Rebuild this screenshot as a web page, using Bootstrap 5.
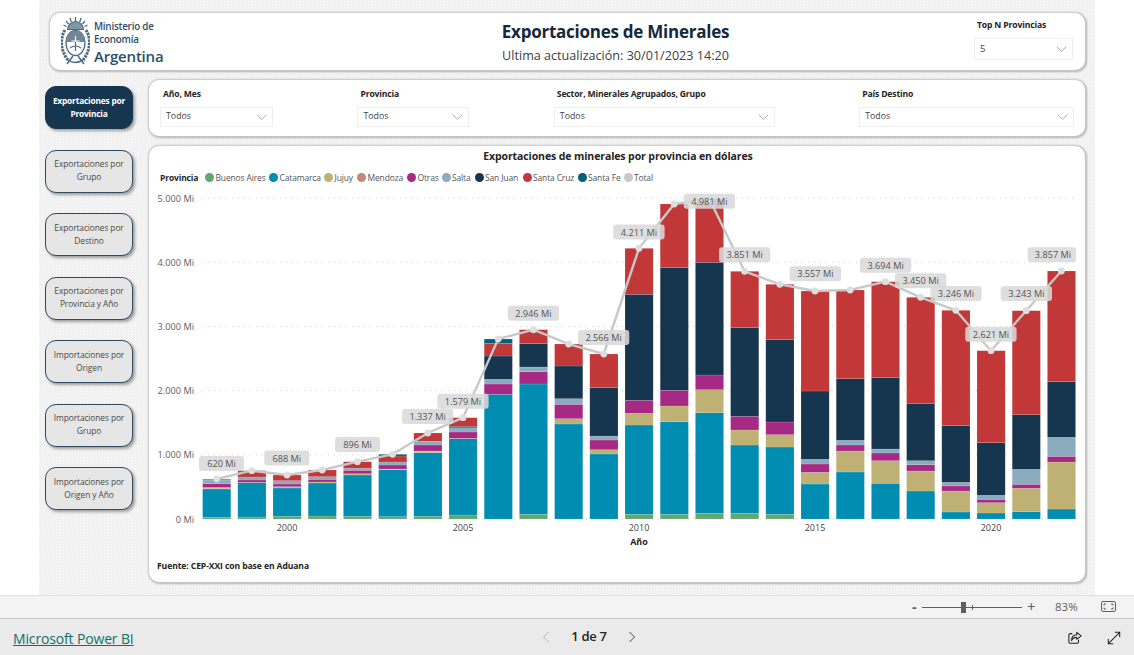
<!DOCTYPE html>
<html lang="es">
<head>
<meta charset="utf-8">
<title>Exportaciones de Minerales</title>
<link href="https://cdn.jsdelivr.net/npm/bootstrap@5.3.0/dist/css/bootstrap.min.css" rel="stylesheet">
<style>
html,body{height:100%;overflow:hidden;background:#fff;font-family:"Open Sans","Noto Sans",sans-serif;color:#333}
.app-shell{height:655px;width:1134px}
.report-canvas{width:1056px;height:595px;margin-left:39px;padding:13px 10px 0 11px;background-color:#f3f3f3;background-image:conic-gradient(#f0f0f0 25%,#f6f6f6 0 50%,#f0f0f0 0 75%,#f6f6f6 0);background-size:3px 3px}
.pane{background:#fff;border-radius:10px;box-shadow:0 0 2px 1px #c9c9c9,1px 1px 2px 1px #b5b5b5}
.head-pane{height:57px;padding:0 12px 0 11px}
.logo-box{width:208px;height:57px}
.logo-words{color:#2c4f68;line-height:1;margin-left:4px;padding-top:2px}
.logo-words .minor{font-size:9.8px;font-weight:600;line-height:13px;letter-spacing:-.2px}
.logo-words .major{font-size:15px;font-weight:600;line-height:19px;letter-spacing:-.2px;padding-top:1px}
.title-block{padding-top:2px}
.main-title{font-size:17px;font-weight:700;color:#16293a;line-height:24px;letter-spacing:-.25px}
.sub-title{font-size:12.6px;color:#404040;line-height:18px;margin-top:3px}
.field-label{font-size:8.6px;font-weight:700;color:#252423;line-height:12px;letter-spacing:-.15px;margin-left:3px}
.drop-box{height:20px;background:#fff;border:1px solid #eee;font-size:8.8px;color:#444;padding:0 5px;margin-top:7px}
.top-n{width:99px;margin:-4px 0 0 12px}
.top-n .drop-box{height:22px;margin-top:7px;font-size:9.5px}
.body-flow{margin-top:10px;margin-left:-5px}
.side-nav{width:88px;padding-top:6px;gap:20.5px;margin-right:16px}
.page-btn{width:88px;height:43px;padding:0 2px 2px;border-radius:11px;border:1.3px solid #2f4c63;background:#e6e6e6;color:#4a4a4a;font-size:8.4px;line-height:13px;box-shadow:2px 2px 3px rgba(0,0,0,.35);letter-spacing:-.1px}
.page-btn.is-current,.page-btn.is-current:hover{background:#16354e;border-color:#16354e;color:#fff;font-weight:700;letter-spacing:-.2px}
.main-col{width:936px;gap:10px}
.filter-pane{height:56px;padding:8px 11px 0;gap:84.5px}
.w-a{width:113px}.w-b{width:112px}.w-c{width:221px}.w-d{width:215px}
.chart-pane{height:436px}
.chart-title{font-size:10.5px;font-weight:700;color:#252423;padding-top:3px;line-height:14px;padding-left:2px;letter-spacing:-.1px}
.legend-row{font-size:8.5px;color:#555;padding:4px 0 0 11px;height:25px;line-height:12px;letter-spacing:-.15px}
.legend-row b{color:#252423;width:45px}
.lg{width:var(--w);align-items:center;gap:1.5px}
.dot{width:9px;height:9px;border-radius:50%;flex:none}
.plot{display:block;width:936px;height:360px}
.plot text{font-family:"Open Sans","Noto Sans",sans-serif}
.source-note{font-size:8.6px;font-weight:700;color:#252423;padding:12px 0 0 8px;line-height:12px;letter-spacing:-.1px}
.zoom-bar{height:24px;background:#f3f3f3;border-top:1px solid #e0e0e0;border-bottom:1px solid #c8c8c8;color:#605e5c;font-size:11.5px}
.zoom-minus{position:absolute;left:912px;top:0;line-height:22px;font-size:14px;font-weight:700}
.zoom-plus{position:absolute;left:1027px;top:0;line-height:21px;font-size:15px}
.zoom-track{position:absolute;left:922px;top:11px;width:100px;height:1px;background:#605e5c}
.zoom-thumb{position:absolute;left:39px;top:-5px;width:5px;height:11px;background:#605e5c}
.zoom-tick{position:absolute;left:50px;top:-2px;width:1px;height:5px;background:#605e5c}
.zoom-pct{position:absolute;left:1055px;top:0;line-height:22px}
.zoom-fit{position:absolute;left:1101px;top:5px}
.foot-bar{height:36px;background:#eaeaea}
.pbi-link{position:absolute;left:13px;top:10px;font-size:14px;color:#107069;line-height:20px;letter-spacing:-.15px}
.pager{position:absolute;left:541px;top:0;width:96px;height:36px;color:#252423;font-size:13px;font-weight:600;letter-spacing:-.3px}
.foot-ico{position:absolute;top:12px}
</style>
</head>
<body>
<div class="app-shell d-flex flex-column">
  <div class="report-canvas">
    <div class="pane head-pane d-flex align-items-center">
      <div class="logo-box d-flex align-items-center">
        <svg width="29" height="49" viewBox="0 0 29 49" aria-hidden="true">
          <g fill="none" stroke="#4f6a7e">
            <path d="M14.500 0v4M9 1l1.200 4M20 1l-1.200 4M5 4l2.500 3M24 4l-2.500 3M2.500 8l3 1.500M26.500 8l-3 1.500" stroke-width="1.300"/>
            <path d="M6.500 12.500a8 8 0 0 1 16 0z" fill="#7f96a7" stroke-width="1.200"/>
            <ellipse cx="14.500" cy="26" rx="9.500" ry="12.500" fill="#fff" stroke-width="1.400"/>
            <path d="M5.300 25h18.400v-4.500c-1.500-4-5-7-9.200-7s-7.700 3-9.200 7z" fill="#6f8798" stroke="none"/>
            <path d="M14.500 19v14M10.500 24h8M9 31q5.500-4 11 0" stroke="#fff" stroke-width="1.100"/>
            <path d="M14.500 25v9M9 31q5.500-4 11 0" stroke-width="1.200"/>
            <path d="M4 13C-1 21-1 33 7 43M25 13c5 8 5 20-3 30" stroke-width="3" stroke-dasharray="2.500 .8"/>
            <path d="M7 43q7 5 15 0M12 39l-6 8M17 39l6 8" stroke-width="1.500"/>
          </g>
        </svg>
        <div class="logo-words">
          <div class="minor">Ministerio de</div>
          <div class="minor">Economía</div>
          <div class="major">Argentina</div>
        </div>
      </div>
      <div class="flex-grow-1 text-center title-block">
        <div class="main-title">Exportaciones de Minerales</div>
        <div class="sub-title">Ultima actualización: 30/01/2023 14:20</div>
      </div>
      <div class="top-n">
        <div class="field-label">Top N Provincias</div>
        <div class="drop-box d-flex align-items-center justify-content-between"><span>5</span>
          <svg width="11" height="6" viewBox="0 0 12 7" aria-hidden="true"><path d="M.5.800l5.500 5.400L11.500.800" fill="none" stroke="#999"/></svg></div>
      </div>
    </div>
    <div class="body-flow d-flex">
      <div class="side-nav d-flex flex-column">
        <button class="btn page-btn is-current">Exportaciones por Provincia</button>
        <button class="btn page-btn">Exportaciones por Grupo</button>
        <button class="btn page-btn">Exportaciones por Destino</button>
        <button class="btn page-btn">Exportaciones por Provincia y Año</button>
        <button class="btn page-btn">Importaciones por Origen</button>
        <button class="btn page-btn">Importaciones por Grupo</button>
        <button class="btn page-btn">Importaciones por Origen y Año</button>
      </div>
      <div class="main-col d-flex flex-column">
        <div class="pane filter-pane d-flex">
          <div class="w-a"><div class="field-label">Año, Mes</div><div class="drop-box d-flex align-items-center justify-content-between"><span>Todos</span><svg width="11" height="6" viewBox="0 0 12 7" aria-hidden="true"><path d="M.5.800l5.500 5.400L11.500.800" fill="none" stroke="#999"/></svg></div></div>
          <div class="w-b"><div class="field-label">Provincia</div><div class="drop-box d-flex align-items-center justify-content-between"><span>Todos</span><svg width="11" height="6" viewBox="0 0 12 7" aria-hidden="true"><path d="M.5.800l5.500 5.400L11.500.800" fill="none" stroke="#999"/></svg></div></div>
          <div class="w-c"><div class="field-label">Sector, Minerales Agrupados, Grupo</div><div class="drop-box d-flex align-items-center justify-content-between"><span>Todos</span><svg width="11" height="6" viewBox="0 0 12 7" aria-hidden="true"><path d="M.5.800l5.500 5.400L11.500.800" fill="none" stroke="#999"/></svg></div></div>
          <div class="w-d"><div class="field-label">País Destino</div><div class="drop-box d-flex align-items-center justify-content-between"><span>Todos</span><svg width="11" height="6" viewBox="0 0 12 7" aria-hidden="true"><path d="M.5.800l5.500 5.400L11.500.800" fill="none" stroke="#999"/></svg></div></div>
        </div>
        <div class="pane chart-pane">
          <div class="chart-title text-center">Exportaciones de minerales por provincia en dólares</div>
          <div class="legend-row d-flex align-items-center" id="legend"></div>
          <svg class="plot" id="plot" viewBox="149 188 936 360" role="img" aria-label="Exportaciones por provincia"></svg>
          <div class="source-note">Fuente: CEP-XXI con base en Aduana</div>
        </div>
      </div>
    </div>
  </div>
  <div class="zoom-bar position-relative">
    <span class="zoom-minus">-</span>
    <div class="zoom-track"><div class="zoom-thumb"></div><div class="zoom-tick"></div></div>
    <span class="zoom-plus">+</span>
    <span class="zoom-pct">83%</span>
    <svg class="zoom-fit" width="15" height="12" viewBox="0 0 15 12" aria-hidden="true"><rect x=".5" y=".5" width="14" height="10" rx="1.500" fill="none" stroke="#605e5c"/><path d="M3 4.500V3h2M12 4.500V3h-2M3 6.500V8h2M12 6.500V8h-2" fill="none" stroke="#605e5c"/></svg>
  </div>
  <div class="foot-bar position-relative">
    <a class="pbi-link" href="#">Microsoft Power BI</a>
    <div class="pager d-flex align-items-center justify-content-between">
      <svg width="10" height="12" viewBox="0 0 10 12" aria-hidden="true"><path d="M7.500 1L2.500 6l5 5" fill="none" stroke="#b5b5b5"/></svg>
      <span>1 de 7</span>
      <svg width="10" height="12" viewBox="0 0 10 12" aria-hidden="true"><path d="M2.500 1l5 5-5 5" fill="none" stroke="#444"/></svg>
    </div>
    <svg class="foot-ico" style="left:1068px" width="14" height="14" viewBox="0 0 16 16" aria-hidden="true"><path d="M5 3H2.500A1.500 1.500 0 0 0 1 4.500v8A1.500 1.500 0 0 0 2.500 14h8a1.500 1.500 0 0 0 1.500-1.500V10" fill="none" stroke="#252423" stroke-width="1.200"/><path d="M10 1.500l5 4-5 4V7.300C7 7.300 5 8.500 4 11c0-4 2-6.500 6-6.800z" fill="none" stroke="#252423" stroke-width="1.200" stroke-linejoin="round"/></svg>
    <svg class="foot-ico" style="left:1107px" width="14" height="14" viewBox="0 0 16 16" aria-hidden="true"><path d="M1.500 14.500l13-13M9 1.500h5.500V7M1.500 9v5.500H7" fill="none" stroke="#252423" stroke-width="1.200"/></svg>
  </div>
</div>
<script src="https://cdn.jsdelivr.net/npm/bootstrap@5.3.0/dist/js/bootstrap.bundle.min.js"></script>
<script>
var C={g:'#63a66e',b:'#018db1',t:'#bfb073',m:'#c08a72',o:'#a62a84',s:'#8babbf',j:'#16354e',r:'#c23738',f:'#01607a',total:'#c8c8c8'};
var leg=[['Buenos Aires',C.g,64],['Catamarca',C.b,55],['Jujuy',C.t,33],['Mendoza',C.m,50],['Otras',C.o,34.5],['Salta',C.s,33],['San Juan',C.j,48],['Santa Cruz',C.r,55],['Santa Fe',C.f,46],['Total',C.total,40]];
var lh='<b class="d-block">Provincia</b>';
leg.forEach(function(l){lh+='<span class="lg d-flex" style="--w:'+l[2]+'px"><i class="dot" style="background:'+l[1]+'"></i>'+l[0]+'</span>'});
document.getElementById('legend').innerHTML=lh;
/* stack tops in screen y: green, blue, tan, mendoza, magenta, salta, san juan, santa cruz, santa fe */
var S=[
[517.3,489,488.3,487.3,483.7,480,479.7,479,479],
[517,482.7,482.3,482.3,480,477.3,477,470.7,470.7],
[516.3,488,487,486.7,484,480.7,480.7,475,475],
[516,483,482,482,479.3,476.7,476.7,470,470],
[516.3,475,473.7,473.7,470.3,468.3,468.3,461.7,461.7],
[516.7,469.7,469.3,469,465,462.3,462,456,454.3],
[516.3,452.7,451.7,451,445,441.3,441.3,433,433],
[515,438.7,438.7,438.3,432,427.7,426.3,417.7,417.7],
[519,394.3,394.3,394.3,384,379.3,356,343.3,339],
[514.3,384,384,384,371.7,367,343.7,329.7,329.7],
[519,424,418.7,418.7,404.3,398.7,366,344,344],
[519,454,449.7,449.7,440,436,387.7,354,354],
[514.3,425,413.3,413.3,400.3,400.3,294.3,248.3,248.3],
[514.3,421.7,406,406,390.3,390.3,267.7,204,204],
[513.3,412.7,389.7,389.7,375,375,262.3,199,199],
[513.3,445,430,430,416.3,416.3,327.7,271.3,271.3],
[514.3,447,434.7,434.7,422,422,339.7,284.3,284.3],
[519,484,472.3,472.3,464,459.3,391,291,291],
[519,472,451,451,445,440.3,378.7,290,290],
[519,483.3,460.7,460.7,453,449,377.7,281.7,281.7],
[519,491,471,471,464.7,460.7,403.3,297.3,297.3],
[519,512,491,491,486,482.3,425.7,310.3,310.3],
[519,513,502.7,502.7,499.3,495.3,442.7,350.7,350.7],
[519,511.7,488.3,488.3,484.3,469.3,414.7,310.7,310.7],
[519,509,462,462,456.3,437.3,381.7,271,271]];
var keys=['g','b','t','m','o','s','j','r','f'];
var LBL=[['620 Mi',199,456,45],['688 Mi',264.3,450.5,45],['896 Mi',335,437,45],['1.337 Mi',402,409,51.3],['1.579 Mi',437.3,393.7,51.3],['2.946 Mi',507.7,305.7,51.3],['2.566 Mi',578,330,51.3],['4.211 Mi',613.3,224.5,51.3],['4.981 Mi',683.7,193.7,51.3],['3.851 Mi',719,247.3,51.3],['3.557 Mi',789.7,266.3,51.3],['3.694 Mi',860,257.7,51.3],['3.450 Mi',895,273.3,51.3],['3.246 Mi',930.3,286,51.3],['2.621 Mi',965.3,326.7,51.3],['3.243 Mi',1000.7,286,51.3],['3.857 Mi',1027.7,247.3,48.3]];
function cx(i){return 216.6+35.2*i}
var h='';
[[198,'5.000 Mi'],[262.2,'4.000 Mi'],[326.4,'3.000 Mi'],[390.6,'2.000 Mi'],[454.8,'1.000 Mi'],[519,'0 Mi']].forEach(function(t){
 h+='<line x1="202" x2="1076" y1="'+t[0]+'" y2="'+t[0]+'" stroke="#cfcfcf" stroke-dasharray="1 5"/>';
 h+='<text x="194" y="'+(t[0]+3.5)+'" text-anchor="end" font-size="9.2" fill="#605e5c">'+t[1]+'</text>';
});
S.forEach(function(a,i){var prev=519,x=cx(i)-14;
 a.forEach(function(top,k){if(prev-top>.05){h+='<rect x="'+x.toFixed(1)+'" y="'+top+'" width="28.2" height="'+(prev-top).toFixed(1)+'" fill="'+C[keys[k]]+'" stroke="rgba(255,255,255,.22)" stroke-width=".6"/>';prev=top}});
});
var pts=S.map(function(a,i){return cx(i).toFixed(1)+','+a[8]}).join(' ');
h+='<polyline points="'+pts+'" fill="none" stroke="'+C.total+'" stroke-width="2.4" stroke-linejoin="round"/>';
S.forEach(function(a,i){h+='<circle cx="'+cx(i).toFixed(1)+'" cy="'+a[8]+'" r="3.4" fill="#dedede"/>'});
LBL.forEach(function(l){
 h+='<rect x="'+l[1]+'" y="'+l[2]+'" width="'+l[3]+'" height="15" rx="3" fill="#d9d9d9" fill-opacity=".88"/>';
 var c=l[0]==='3.857 Mi'?1053:l[1]+l[3]/2;
 h+='<text x="'+c+'" y="'+(l[2]+11)+'" text-anchor="middle" font-size="9.2" fill="#555">'+l[0]+'</text>';
});
[[2000,287],[2005,463],[2010,639],[2015,815],[2020,991]].forEach(function(t){h+='<text x="'+t[1]+'" y="531" text-anchor="middle" font-size="9" fill="#444">'+t[0]+'</text>'});
h+='<text x="639" y="545" text-anchor="middle" font-size="9" font-weight="700" fill="#252423">Año</text>';
document.getElementById('plot').innerHTML=h;
</script>
</body>
</html>
